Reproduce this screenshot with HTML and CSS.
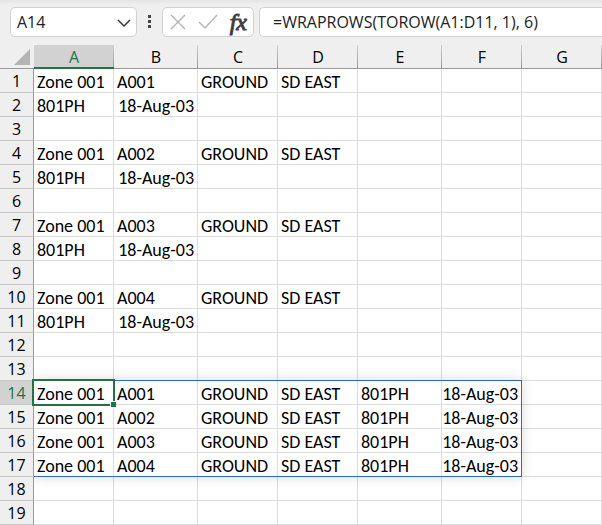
FILE: index.html
```
<!DOCTYPE html>
<html lang="en">
<head>
<meta charset="utf-8">
<title>Worksheet</title>
<link rel="stylesheet" href="styles.css">
</head>
<body>
<header class="bar">
  <div class="box name-box">
    <input class="name-input" type="text" value="A14" aria-label="Name box">
    <button class="icon-button" type="button" aria-label="Open name list">
      <svg width="14" height="8" viewBox="0 0 14 8"><path d="M1 1l6 6 6-6" fill="none" stroke="#3b3b3b" stroke-width="1.5"/></svg>
    </button>
  </div>
  <svg class="grip" width="4" height="14" viewBox="0 0 4 14"><path d="M0 0h3v3H0zM0 5h3v3H0zM0 10h3v3H0z" fill="#444"/></svg>
  <div class="box actions">
    <button class="icon-button" type="button" aria-label="Cancel">
      <svg width="16" height="16" viewBox="0 0 16 16"><path d="M1 1l14 14M15 1L1 15" fill="none" stroke="#b3b3b3" stroke-width="1.4"/></svg>
    </button>
    <button class="icon-button" type="button" aria-label="Enter">
      <svg width="20" height="16" viewBox="0 0 20 16"><path d="M1 8l6 6L19 1" fill="none" stroke="#b3b3b3" stroke-width="1.4"/></svg>
    </button>
    <button class="icon-button fx" type="button" aria-label="Insert function">fx</button>
  </div>
  <div class="box formula-box">
    <input class="formula-input" type="text" value="=WRAPROWS(TOROW(A1:D11, 1), 6)" aria-label="Formula">
  </div>
</header>
<main>
<table class="sheet">
  <colgroup><col class="col-head"><col class="col-std"><col class="col-wide"><col class="col-std"><col class="col-std"><col class="col-wide"><col class="col-std"><col></colgroup>
  <thead>
    <tr><th class="corner"><svg width="16" height="16" viewBox="0 0 16 16"><path d="M16 0v16H0z" fill="#b4b4b4"/></svg></th><th class="active">A</th><th>B</th><th>C</th><th>D</th><th>E</th><th>F</th><th>G</th></tr>
  </thead>
  <tbody>
    <tr><th>1</th><td>Zone 001</td><td>A001</td><td>GROUND</td><td>SD EAST</td><td></td><td></td><td></td></tr>
    <tr><th>2</th><td>801PH</td><td class="date">18-Aug-03</td><td></td><td></td><td></td><td></td><td></td></tr>
    <tr><th>3</th><td></td><td></td><td></td><td></td><td></td><td></td><td></td></tr>
    <tr><th>4</th><td>Zone 001</td><td>A002</td><td>GROUND</td><td>SD EAST</td><td></td><td></td><td></td></tr>
    <tr><th>5</th><td>801PH</td><td class="date">18-Aug-03</td><td></td><td></td><td></td><td></td><td></td></tr>
    <tr><th>6</th><td></td><td></td><td></td><td></td><td></td><td></td><td></td></tr>
    <tr><th>7</th><td>Zone 001</td><td>A003</td><td>GROUND</td><td>SD EAST</td><td></td><td></td><td></td></tr>
    <tr><th>8</th><td>801PH</td><td class="date">18-Aug-03</td><td></td><td></td><td></td><td></td><td></td></tr>
    <tr><th>9</th><td></td><td></td><td></td><td></td><td></td><td></td><td></td></tr>
    <tr><th>10</th><td>Zone 001</td><td>A004</td><td>GROUND</td><td>SD EAST</td><td></td><td></td><td></td></tr>
    <tr><th>11</th><td>801PH</td><td class="date">18-Aug-03</td><td></td><td></td><td></td><td></td><td></td></tr>
    <tr><th>12</th><td></td><td></td><td></td><td></td><td></td><td></td><td></td></tr>
    <tr><th>13</th><td></td><td></td><td></td><td></td><td></td><td></td><td></td></tr>
    <tr><th class="active">14</th><td class="selected">Zone 001<span class="spill"></span><span class="outline"></span><span class="handle"></span></td><td>A001</td><td>GROUND</td><td>SD EAST</td><td>801PH</td><td class="date">18-Aug-03</td><td></td></tr>
    <tr><th>15</th><td>Zone 001</td><td>A002</td><td>GROUND</td><td>SD EAST</td><td>801PH</td><td class="date">18-Aug-03</td><td></td></tr>
    <tr><th>16</th><td>Zone 001</td><td>A003</td><td>GROUND</td><td>SD EAST</td><td>801PH</td><td class="date">18-Aug-03</td><td></td></tr>
    <tr><th>17</th><td>Zone 001</td><td>A004</td><td>GROUND</td><td>SD EAST</td><td>801PH</td><td class="date">18-Aug-03</td><td></td></tr>
    <tr><th>18</th><td></td><td></td><td></td><td></td><td></td><td></td><td></td></tr>
    <tr><th>19</th><td></td><td></td><td></td><td></td><td></td><td></td><td></td></tr>
  </tbody>
</table>
</main>
</body>
</html>
```
FILE: styles.css
```
* { box-sizing: border-box; }

body {
  margin: 0;
  background: #fff;
  color: #000;
  font-family: "Noto Sans", "Open Sans", sans-serif;
}

.bar {
  display: flex;
  align-items: center;
  padding: 7px 0 8px 10px;
  background: linear-gradient(#e4e4e4, #efefef 5px);
}

.box {
  display: flex;
  align-items: center;
  height: 30px;
  background: #fff;
  border: 1px solid #d1d1d1;
  border-radius: 5px;
}

.name-box { width: 127px; padding: 0 3px 0 6px; }
.grip { margin: 0 10px 0 11px; }
.actions { width: 92px; padding: 0 6px 0 7px; justify-content: space-between; }
.formula-box { flex: 1; margin-left: 5px; padding-left: 13px; border-right: 0; border-radius: 5px 0 0 5px; }

input {
  min-width: 0;
  width: 100%;
  padding: 0;
  border: 0;
  outline: 0;
  background: transparent;
  color: #222;
  font: 16px/22px "Open Sans", sans-serif;
}

.icon-button {
  display: flex;
  padding: 0;
  border: 0;
  background: transparent;
}

.name-box .icon-button { padding: 4px 2px 2px; }

.fx {
  color: #333;
  font: italic 24px/24px "Liberation Serif", serif;
  -webkit-text-stroke: 1px #444;
}

.sheet {
  width: 100%;
  table-layout: fixed;
  border-collapse: separate;
  border-spacing: 0;
}

.col-head { width: 34px; }
.col-std { width: 80px; }
.col-wide { width: 84px; }

th, td {
  height: 24px;
  border: 0 solid #dcdcdc;
  border-width: 0 1px 1px 0;
  white-space: nowrap;
}

td {
  padding: 3px 3px 0;
  text-align: left;
  font: 18px/20px Carlito, Lato, sans-serif;
}

th {
  padding: 1px 0 0;
  background: #efefef;
  text-align: center;
  font: 16px/22px "Open Sans", sans-serif;
}

tbody th {
  border-color: #999 #999 #c6c6c6;
}

thead th {
  border-bottom-color: #999;
  border-right: 0;
  background: linear-gradient(#cfcfcf, #999) right / 1px 100% no-repeat #efefef;
}

thead .corner { background: #efefef; line-height: 0; text-align: right; vertical-align: bottom; padding: 0 4px 3px 0; }

.active { color: #217346; background-color: #d2d2d2; }
thead .active { border-bottom-color: #217346; box-shadow: inset 0 -1px #217346; background-color: #d2d2d2; }

.date { padding-left: 0; text-align: right; }

.selected { position: relative; }

.spill, .outline, .handle { position: absolute; pointer-events: none; }

.spill {
  top: -1px;
  left: 0;
  width: 488px;
  height: 97px;
  border: 1px solid #2f66c0;
  border-left: 0;
  box-shadow: 0 0 12px rgba(0, 0, 0, 0.15);
  clip-path: inset(-14px -14px -14px 0);
}

.outline {
  inset: -2px;
  border: 2px solid #217346;
}

.handle {
  right: -3px;
  bottom: -3px;
  width: 6px;
  height: 6px;
  background: #217346;
  border: 0 solid #fff;
  border-width: 1px 0 0 1px;
}
```
